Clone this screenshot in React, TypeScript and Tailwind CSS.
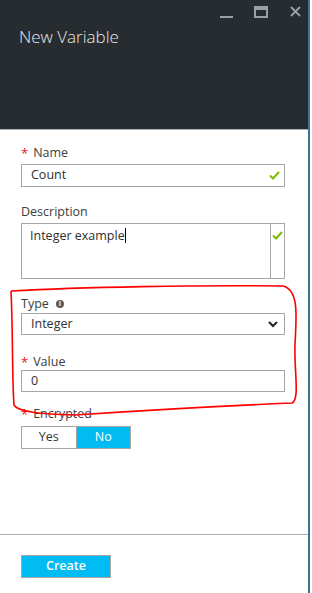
import React from "react";

const font = { fontFamily: '"Open Sans", "Noto Sans", Arial, sans-serif' };

const Check = () => (
  <svg width="11" height="9" viewBox="0 0 11 9" className="shrink-0">
    <path d="M1 4.5 L4 7.5 L10 1" fill="none" stroke="#7fba00" strokeWidth="2" />
  </svg>
);

const Label = ({ text, required }: { text: string; required?: boolean }) => (
  <div className="flex items-center h-4 text-[12.5px] text-[#3c3c3c] leading-4">
    {required && <span className="text-[#e81123] mr-[5px] text-[13px]">*</span>}
    {text}
  </div>
);

export default function App() {
  return (
    <div className="relative w-[312px] h-[593px] bg-white" style={font}>
      <div className="flex flex-col h-full w-[310px] border-r-2 border-[#3d7397]">
        {/* header */}
        <header className="h-[130px] shrink-0 bg-[#272c31] border-b border-[#a9b0b5] relative">
          <div className="flex justify-end items-start pr-[7px] pt-[6px] h-[20px]">
            <span className="mt-[10px] w-[13px] h-[2px] bg-[#9aa0a5]" />
            <span className="ml-[21px] w-[14px] h-[12px] border-2 border-t-[4px] border-[#9aa0a5]" />
            <svg className="ml-[22px]" width="11" height="11" viewBox="0 0 11 11">
              <path d="M1 1 L10 10 M10 1 L1 10" stroke="#9aa0a5" strokeWidth="1.8" />
            </svg>
          </div>
          <h1 className="ml-[19px] mt-[5px] text-[17px] font-light text-[#e8e8e8] leading-6">
            New Variable
          </h1>
        </header>

        <main className="flex-1 pl-[21px] pr-[23px] text-[#2f2f2f]">
          <div className="mt-[15px]">
            <Label text="Name" required />
          </div>
          <div className="mt-[3px] h-[23px] border border-[#a6a6a6] flex items-center pl-[9px] pr-[4px] text-[12.5px]">
            <span className="flex-1">Count</span>
            <Check />
          </div>

          <div className="mt-[17px]">
            <Label text="Description" />
          </div>
          <div className="mt-[3px] h-[56px] border border-[#a6a6a6] flex">
            <div className="flex-1 pl-[8px] pt-[4px] text-[12.5px] leading-4 flex items-start">
              Integer example<span className="inline-block w-px h-[15px] bg-black" />
            </div>
            <div className="w-[14px] border-l border-[#a6a6a6] flex justify-center pt-[7px]">
              <Check />
            </div>
          </div>

          <div className="mt-[17px] flex items-center">
            <Label text="Type" />
            <span className="ml-[7px] w-[8px] h-[8px] rounded-full bg-[#5a5a5a] text-white text-[7px] leading-[8px] font-bold flex items-center justify-center">
              i
            </span>
          </div>
          <div className="mt-[1px] h-[22px] border border-[#a6a6a6] flex items-center pl-[9px] pr-[6px] text-[12.5px]">
            <span className="flex-1">Integer</span>
            <svg width="10" height="7" viewBox="0 0 10 7">
              <path d="M1 1 L5 5 L9 1" fill="none" stroke="#222" strokeWidth="2" />
            </svg>
          </div>

          <div className="mt-[19px]">
            <Label text="Value" required />
          </div>
          <div className="h-[22px] border border-[#a6a6a6] flex items-center pl-[9px] text-[12.5px]">
            0
          </div>

          <div className="mt-[14px]">
            <Label text="Encrypted" required />
          </div>
          <div className="mt-[4px] flex h-[23px] w-[110px] border border-[#a6a6a6] text-[12.5px]">
            <span className="flex-1 flex items-center justify-center text-[#333]">Yes</span>
            <span className="flex-1 flex items-center justify-center bg-[#00bcf2] text-white border-l border-[#a6a6a6]">
              No
            </span>
          </div>
        </main>

        <footer className="h-[59px] shrink-0 border-t border-[#a9b0b5] pl-[21px] pt-[20px]">
          <button className="block w-[90px] h-[23px] bg-[#00bcf2] border border-[#a6a6a6] text-white text-[12.5px] font-semibold">
            Create
          </button>
        </footer>
      </div>

      {/* red annotation */}
      <svg className="absolute left-0 top-0 pointer-events-none" width="312" height="593">
        <path
          d="M11 291 C 80 287, 200 285, 283 286 C 300 290, 296 320, 295 345 C 294 370, 300 400, 292 403 C 220 406, 120 412, 75 415 C 40 414, 18 412, 14 405 C 12 380, 13 330, 11 291"
          fill="none"
          stroke="#ff0000"
          strokeWidth="1.6"
        />
      </svg>
    </div>
  );
}
